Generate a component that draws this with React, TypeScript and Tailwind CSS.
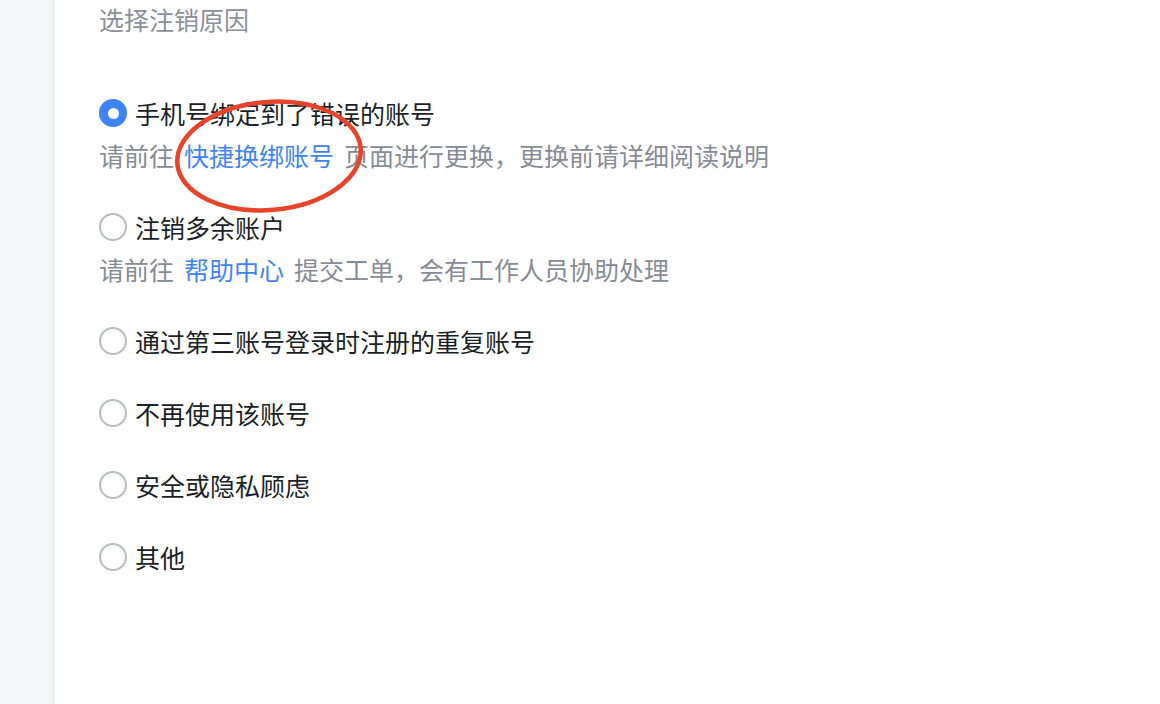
import React, { useState } from 'react';

type Reason = {
  label: string;
  desc?: { before: string; link: string; after: string };
};

const reasons: Reason[] = [
  {
    label: '手机号绑定到了错误的账号',
    desc: { before: '请前往', link: '快捷换绑账号', after: '页面进行更换，更换前请详细阅读说明' },
  },
  {
    label: '注销多余账户',
    desc: { before: '请前往', link: '帮助中心', after: '提交工单，会有工作人员协助处理' },
  },
  { label: '通过第三账号登录时注册的重复账号' },
  { label: '不再使用该账号' },
  { label: '安全或隐私顾虑' },
  { label: '其他' },
];

function Radio({ checked }: { checked: boolean }) {
  if (checked) {
    return (
      <span className="flex h-[28px] w-[28px] shrink-0 items-center justify-center rounded-full bg-[#3e84f7]">
        <span className="h-[11px] w-[11px] rounded-full bg-white" />
      </span>
    );
  }
  return <span className="h-[28px] w-[28px] shrink-0 rounded-full border-[2.5px] border-[#b9bcc3] bg-white" />;
}

export default function App() {
  const [selected, setSelected] = useState(0);

  return (
    <div
      className="flex h-[704px] w-full overflow-hidden bg-white"
      style={{ fontFamily: '"Noto Sans CJK SC", "Noto Sans", sans-serif' }}
    >
      <div className="w-[55px] shrink-0 bg-[#f5f6f8]" />
      <div className="relative flex-1 bg-white pl-[44px] pt-[3px] shadow-[-3px_0_5px_rgba(0,0,0,0.05)]">
        <h2 className="text-[25px] leading-[32px] text-[#8a8f99]">选择注销原因</h2>

        <div className="mt-[62px] flex flex-col gap-[40px]">
          {reasons.map((r, i) => (
            <div key={r.label}>
              <label className="flex cursor-pointer items-center gap-[8px]" onClick={() => setSelected(i)}>
                <Radio checked={selected === i} />
                <span className="text-[25px] leading-[32px] text-[#1b1f26]">{r.label}</span>
              </label>
              {r.desc && (
                <p className="mt-[11px] text-[25px] leading-[31px] text-[#878c96]">
                  {r.desc.before}
                  <a className="mx-[10px] text-[#3e84f7]">{r.desc.link}</a>
                  {r.desc.after}
                </p>
              )}
            </div>
          ))}
        </div>

        {/* red annotation circle */}
        <svg className="pointer-events-none absolute left-[118px] top-[94px]" width="200" height="130" viewBox="0 0 200 130">
          <ellipse
            cx="96"
            cy="62"
            rx="92"
            ry="54"
            transform="rotate(-5 96 62)"
            fill="none"
            stroke="#e8432b"
            strokeWidth="4.5"
          />
        </svg>
      </div>
    </div>
  );
}
